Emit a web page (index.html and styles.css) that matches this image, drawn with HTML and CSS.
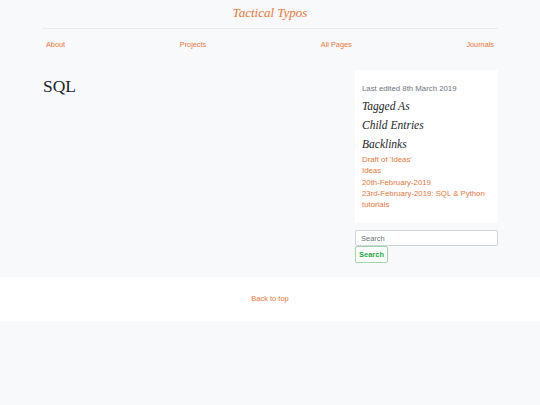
FILE: index.html
```html
<!DOCTYPE html>
<html>
<head>
<meta charset="utf-8">
<link rel="stylesheet" href="styles.css">
</head>
<body>
<div class="container">
  <header class="site-header">
    <a class="site-title" href="#">Tactical Typos</a>
  </header>
  <nav class="nav">
    <a href="#">About</a>
    <a href="#">Projects</a>
    <a href="#">All Pages</a>
    <a href="#">Journals</a>
  </nav>
  <main class="main">
    <section class="content">
      <h1 class="page-title">SQL</h1>
    </section>
    <aside class="sidebar">
      <div class="card">
        <p class="edited">Last edited 8th March 2019</p>
        <h4 class="side-head">Tagged As</h4>
        <h4 class="side-head">Child Entries</h4>
        <h4 class="side-head">Backlinks</h4>
        <ul class="links">
          <li><a href="#">Draft of 'Ideas'</a></li>
          <li><a href="#">Ideas</a></li>
          <li><a href="#">20th-February-2019</a></li>
          <li><a href="#">23rd-February-2019: SQL &amp; Python tutorials</a></li>
        </ul>
      </div>
      <form class="search">
        <input class="search-input" type="text" placeholder="Search">
        <button class="search-btn" type="button">Search</button>
      </form>
    </aside>
  </main>
</div>
<footer class="footer">
  <a href="#">Back to top</a>
</footer>
</body>
</html>
```

FILE: styles.css
```css
html, body {
  margin: 0;
  padding: 0;
  background: #f8f9fa;
  font-family: "Liberation Sans", Arial, sans-serif;
  color: #212529;
}
a {
  color: #e8773a;
  text-decoration: none;
}
.container {
  width: 456px;
  margin: 0 auto;
}
.site-header {
  text-align: center;
  padding: 5px 0 7px;
  border-bottom: 1px solid #e9ecef;
}
.site-title {
  display: block;
  font-family: "Liberation Serif", Georgia, serif;
  font-style: italic;
  font-size: 13px;
  line-height: 16px;
  color: #e8773a;
}
.nav {
  display: flex;
  justify-content: space-between;
  padding: 10px 4px 0;
  font-size: 7.3px;
  line-height: 11px;
}
.main {
  display: flex;
  justify-content: space-between;
  margin-top: 20px;
  padding-bottom: 14.5px;
}
.content {
  flex: 1;
}
.page-title {
  margin: 6px 0 0 1px;
  font-family: "Liberation Serif", Georgia, serif;
  font-weight: normal;
  font-size: 17.5px;
  line-height: 20px;
  color: #212529;
}
.sidebar {
  width: 143px;
}
.card {
  background: #fff;
  padding: 13px 7px 13px;
}
.edited {
  margin: 0;
  font-size: 7.8px;
  line-height: 11px;
  color: #6c757d;
}
.side-head {
  margin: 6px 0 0;
  font-family: "Liberation Serif", Georgia, serif;
  font-style: italic;
  font-weight: normal;
  font-size: 11.5px;
  line-height: 13px;
  color: #212529;
}
.links {
  list-style: none;
  margin: 3px 0 0;
  padding: 0;
  font-size: 7.8px;
  line-height: 11.3px;
}
.search {
  margin-top: 7px;
}
.search-input {
  display: block;
  box-sizing: border-box;
  width: 100%;
  height: 16px;
  margin: 0;
  padding: 0 5px;
  border: 1px solid #ced4da;
  border-radius: 2px;
  background: #fff;
  font-family: "Liberation Sans", Arial, sans-serif;
  font-size: 7.5px;
  color: #495057;
}
.search-input::placeholder {
  color: #6c757d;
}
.search-btn {
  display: block;
  box-sizing: border-box;
  height: 16.5px;
  margin: 0;
  padding: 0 3px;
  border: 1px solid #9ed5a9;
  border-radius: 2px;
  background: #fff;
  color: #28a745;
  font-family: "Liberation Sans", Arial, sans-serif;
  font-weight: bold;
  font-size: 7.5px;
}
.footer {
  background: #fff;
  text-align: center;
  padding: 17px 0;
  font-size: 7.5px;
  line-height: 10px;
}
```
